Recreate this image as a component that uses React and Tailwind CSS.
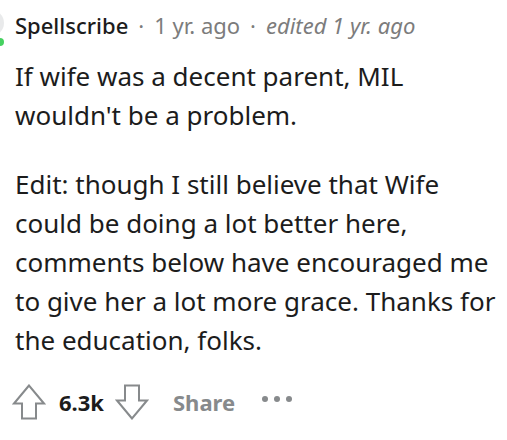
import React from "react";

function Up() {
  return (
    <svg width="34" height="36" viewBox="0 0 34 36" fill="none">
      <path d="M17 1.5 L2 19.5 H10 V34.5 H24 V19.5 H32 Z" stroke="#878a8c" strokeWidth="2" strokeLinejoin="miter" fill="white" />
    </svg>
  );
}
function Down() {
  return (
    <svg width="34" height="36" viewBox="0 0 34 36" fill="none">
      <path d="M17 34.5 L2 16.5 H10 V1.5 H24 V16.5 H32 Z" stroke="#878a8c" strokeWidth="2" strokeLinejoin="miter" fill="white" />
    </svg>
  );
}

export default function App() {
  return (
    <div className="w-[507px] h-[440px] bg-white relative overflow-hidden">
      <div className="absolute left-[-22px] top-[10px] w-[26px] h-[26px] rounded-full bg-[#e9eaeb]" />
      <div className="absolute left-[-4px] top-[38px] w-[8px] h-[8px] rounded-full bg-[#46d160]" />
      <div className="pl-[15px] pr-[2px] pt-[9px]">
        <div className="flex items-center text-[22px] leading-[32px]" style={{ fontFamily: '"Noto Sans", sans-serif' }}>
          <span className="text-[#1c1c1c] font-medium">Spellscribe</span>
          <span className="text-[#7c7c7c] mx-[10px]">·</span>
          <span className="text-[#7c7c7c]">1 yr. ago</span>
          <span className="text-[#7c7c7c] mx-[10px]">·</span>
          <span className="text-[#7c7c7c] italic">edited 1 yr. ago</span>
        </div>
        <div className="mt-[16px] text-[#1c1c1c] text-[26px] leading-[39px]" style={{ fontFamily: '"Noto Sans", sans-serif' }}>
          <p>If wife was a decent parent, MIL wouldn't be a problem.</p>
          <p className="mt-[30px]">Edit: though I still believe that Wife could be doing a lot better here, comments below have encouraged me to give her a lot more grace. Thanks for the education, folks.</p>
        </div>
        <div className="mt-[24px] flex items-center" style={{ fontFamily: '"Noto Sans", sans-serif' }}>
          <div className="ml-[-3px]"><Up /></div>
          <span className="ml-[13px] text-[22px] font-bold text-[#1c1c1c]">6.3k</span>
          <div className="ml-[11px]"><Down /></div>
          <span className="ml-[24px] text-[22px] font-bold text-[#878a8c]">Share</span>
          <div className="ml-[27px] flex gap-[6px] items-center mb-[6px]">
            <span className="w-[6px] h-[6px] rounded-full bg-[#878a8c]" />
            <span className="w-[6px] h-[6px] rounded-full bg-[#878a8c]" />
            <span className="w-[6px] h-[6px] rounded-full bg-[#878a8c]" />
          </div>
        </div>
      </div>
    </div>
  );
}
